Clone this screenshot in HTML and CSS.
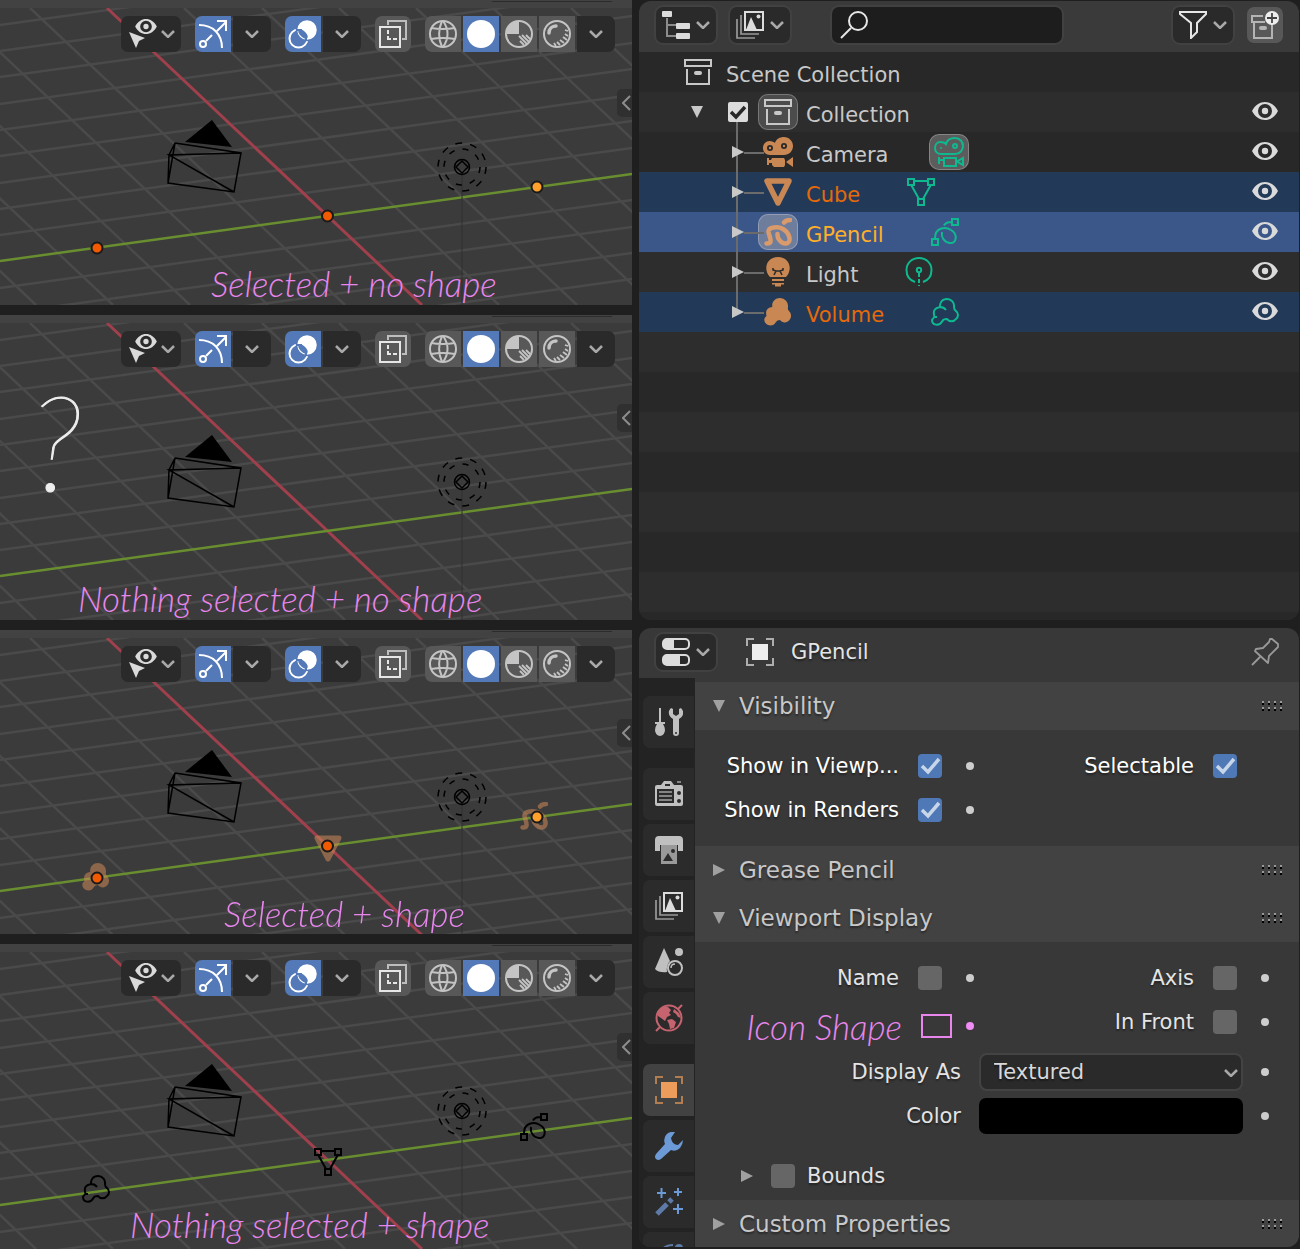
FILE: index.html
```html
<!DOCTYPE html>
<html lang="en">
<head>
  <meta charset="utf-8">
  <meta name="viewport" content="width=device-width, initial-scale=1">
  <title>Icon shapes for empties</title>
  <link rel="stylesheet" href="styles.css">
</head>
<body>

<!-- Icon sprite -->
<svg class="sprite" aria-hidden="true">
  <symbol id="chevron" viewBox="0 0 14 8"><path d="M1 1l6 6 6-6" fill="none" stroke="#a8a8a8" stroke-width="2.5"/></symbol>
  <symbol id="eye" viewBox="0 0 26 18"><path fill="currentColor" fill-rule="evenodd" d="M0 9C6 -3 20 -3 26 9C20 21 6 21 0 9ZM13 2a7 7 0 1 0 0 14a7 7 0 1 0 0-14ZM13 5.8a3.2 3.2 0 1 1 0 6.4a3.2 3.2 0 1 1 0-6.4Z"/></symbol>
  <symbol id="tri-down" viewBox="0 0 12 12"><path fill="currentColor" d="M0 0h12L6 12Z"/></symbol>
  <symbol id="tri-right" viewBox="0 0 12 12"><path fill="currentColor" d="M0 0v12L12 6Z"/></symbol>
  <symbol id="grip" viewBox="0 0 22 10">
    <path stroke="#000" stroke-width="2" stroke-dasharray="2 4" d="M1 3h20M1 9h20"/>
    <path stroke="#999" stroke-width="2" stroke-dasharray="2 4" d="M1 1h20M1 7h20"/>
  </symbol>

  <!-- viewport toolbar -->
  <symbol id="i-gizmo" viewBox="0 0 36 36">
    <g fill="none" stroke="#fff" stroke-width="2"><path d="M4 9C18 9 27 18 27 32M22 15L31 6M22 5h9v10M11 25l6-6"/><circle cx="8" cy="28" r="3"/></g>
  </symbol>
  <symbol id="i-overlay" viewBox="0 0 36 36">
    <circle cx="13.5" cy="22.5" r="9" fill="none" stroke="#fff" stroke-width="2"/>
    <circle cx="22" cy="14" r="10.5" fill="#fff" stroke="#5379b8" stroke-width="1.5"/>
    <ellipse cx="18" cy="18" rx="6" ry="3" transform="rotate(45 18 18)" fill="#5379b8"/>
    <path d="M21 24.500v-5M12 14h5" stroke="#5379b8" stroke-width="2"/>
  </symbol>
  <symbol id="i-xray" viewBox="0 0 36 36">
    <g fill="none" stroke="#e6e6e6" stroke-width="2"><path d="M5 11h20v20H5Z"/><path d="M13 14v4M13 20v3h3M18 23h4"/><path stroke="#bdbdbd" d="M13 9V5h18v18h-4"/></g>
  </symbol>
  <symbol id="i-wire" viewBox="0 0 36 36">
    <g fill="none" stroke="#c4c4c4" stroke-width="2"><circle cx="18" cy="18" r="13"/><path d="M17 5C13 14 13 22 17 31M18 5C24 13 24 23 18 31M6 12q12 2 24 0M6 23q12-2 24 0"/></g>
  </symbol>
  <symbol id="i-solid" viewBox="0 0 36 36"><circle cx="18" cy="18" r="14" fill="#fff"/></symbol>
  <symbol id="i-material" viewBox="0 0 36 36">
    <circle cx="18" cy="18" r="13" fill="none" stroke="#c4c4c4" stroke-width="2"/>
    <path d="M18 18V5A13 13 0 0 0 5 18Z" fill="#c4c4c4"/>
    <path d="M18 20l8 8M21 19l7 7M19 25l4 4M25 19l5 5" stroke="#c4c4c4" stroke-width="1.8"/>
  </symbol>
  <symbol id="i-render" viewBox="0 0 36 36">
    <circle cx="18" cy="18" r="13" fill="none" stroke="#c4c4c4" stroke-width="2"/>
    <path d="M10 17C10 13 13 10 17 10" fill="none" stroke="#c4c4c4" stroke-width="3.5" stroke-linecap="round"/>
    <path d="M26 14l3 1M26 18l3 2M24 21l4 3M21 24l4 3M18 26l3 3M15 27l2 3" stroke="#c4c4c4" stroke-width="1.8"/>
  </symbol>

  <!-- editor headers -->
  <symbol id="i-outliner" viewBox="0 0 28 28">
    <path d="M5 7v18h9M5 14h9" fill="none" stroke="#8c8c8c" stroke-width="2"/>
    <g fill="#dcdcdc"><rect width="10" height="6" rx="1"/><rect x="14" y="12" width="14" height="6" rx="1"/><rect x="14" y="22" width="14" height="6" rx="1"/></g>
  </symbol>
  <symbol id="i-layers" viewBox="0 0 28 28">
    <path d="M1 8v19h18M5 4v19h18" fill="none" stroke="#999" stroke-width="1.7"/>
    <path d="M9 1h18v18H9Z" fill="none" stroke="#dcdcdc" stroke-width="2"/>
    <path d="M10 19l5-13 6 13Z" fill="#dcdcdc"/><circle cx="22.5" cy="5.5" r="2" fill="#dcdcdc"/>
  </symbol>
  <symbol id="i-search" viewBox="0 0 28 28"><g fill="none" stroke="#e6e6e6" stroke-width="2"><circle cx="18" cy="10" r="9"/><path d="M11 17L1 27"/></g></symbol>
  <symbol id="i-filter" viewBox="0 0 28 28"><path d="M1 1h26v2l-9 9v9l-6 6V12L1 3Z" fill="none" stroke="#e6e6e6" stroke-width="2"/></symbol>
  <symbol id="i-newcol" viewBox="0 0 28 28">
    <g fill="none" stroke="#b4b4b4" stroke-width="2"><path d="M12 5H1v6h13M3 12v15h18V14"/></g>
    <rect x="8" y="15" width="8" height="4" rx="2" fill="#b4b4b4"/>
    <circle cx="21" cy="7" r="7" fill="#eee"/><path d="M21 2v10M16 7h10" stroke="#444" stroke-width="1.8"/>
  </symbol>
  <symbol id="i-props" viewBox="0 0 28 28">
    <g fill="none" stroke="#dcdcdc" stroke-width="2"><rect x="1" y="1" width="26" height="10" rx="4"/><rect x="1" y="17" width="26" height="10" rx="4"/></g>
    <path d="M5 1h7v10H5a4 4 0 0 1-4-4V5a4 4 0 0 1 4-4ZM5 17h13v10H5a4 4 0 0 1-4-4v-2a4 4 0 0 1 4-4Z" fill="#dcdcdc"/>
  </symbol>
  <symbol id="i-object" viewBox="0 0 28 28">
    <rect x="6" y="6" width="16" height="16" fill="currentColor"/>
    <path d="M1 8V1h7M20 1h7v7M27 20v7h-7M8 27H1v-7" fill="none" stroke="currentColor" stroke-width="2" opacity=".65"/>
  </symbol>
  <symbol id="i-pin" viewBox="0 0 28 28"><path d="M1 27l8-8M5 14l12 11 1-7 9-9V6l-6-5h-2l-1 3-6 6-7 1-1 2Z" fill="none" stroke="#999" stroke-width="1.8" stroke-linejoin="round"/></symbol>

  <!-- outliner -->
  <symbol id="i-archive" viewBox="0 0 28 28"><g fill="none" stroke="currentColor" stroke-width="2"><path d="M1 2h26v6H1ZM3 11v15h22V11"/></g><rect x="10" y="13" width="8" height="4" rx="2" fill="currentColor"/></symbol>
  <symbol id="i-camera" viewBox="0 0 30 30">
    <path fill="currentColor" fill-rule="evenodd" d="M6.500 4C9 4 11 5 12 6C13 2 17 0 21 0C26 0 30 4 30 9C30 14 26 18 21 18H7C3 18 0 15 0 11C0 7 3 4 6.500 4ZM7 8a3 3 0 1 0 0 6a3 3 0 1 0 0-6ZM21 6a3 3 0 1 0 0 6a3 3 0 1 0 0-6Z"/>
    <path fill="currentColor" d="M4 21h2v2h2l1-2h12l1 2v5l-1 2H11l-2-2v-2H6v2H4ZM23 25l7-5v10Z"/>
    <circle cx="7" cy="11" r="1.2" fill="currentColor"/><circle cx="21" cy="9" r="1.2" fill="currentColor"/>
  </symbol>
  <symbol id="i-camera-data" viewBox="0 0 30 30">
    <g fill="none" stroke="currentColor" stroke-width="2"><path d="M6.500 5C9 5 11 6 12 7C13 3 17 1 21 1C26 1 29 5 29 9C29 13 26 17 21 17H7C3 17 1 14 1 11C1 8 3 5 6.500 5Z"/><circle cx="21" cy="9" r="2"/><path d="M5 20v7M5 23h5v-2h12v8H10v-5M29 21v7l-6-3.500Z"/></g>
    <circle cx="7" cy="11" r="1" fill="currentColor"/>
  </symbol>
  <symbol id="i-mesh" viewBox="0 0 28 28"><path d="M3 3h22L14 25Z" fill="none" stroke="currentColor" stroke-width="5.5" stroke-linejoin="round"/></symbol>
  <symbol id="i-mesh-data" viewBox="0 0 28 28"><path d="M1 1h6v6H1ZM21 1h6v6h-6ZM11 21h6v6h-6ZM7 3h14M4.500 7.500L12 21M23.500 7.500L16 21" fill="none" stroke="currentColor" stroke-width="2"/></symbol>
  <symbol id="i-gp" viewBox="0 0 28 28"><path d="M2.500 25.500C10 26 5 18 4.500 14C4 9 14 8 19 11C26 15 28 25 22 25.500C17 26 13 20 13.500 16M20 4.500Q22 2 26 2" fill="none" stroke="currentColor" stroke-width="4.5" stroke-linecap="round"/></symbol>
  <symbol id="i-gp-data" viewBox="0 0 28 28"><path d="M1 21h6v6H1ZM21 1h6v6h-6ZM13 7.500Q15 4 20 4M4 20C4 10 14 8 20 12C27 16 26 26 18.500 25C13 24 10 19 11 14" fill="none" stroke="currentColor" stroke-width="2"/></symbol>
  <symbol id="i-light" viewBox="0 0 28 30">
    <path fill="currentColor" d="M6 20C-1 13 2 0 14 0S29 13 22 20ZM8 22h12v2H8ZM8 26h12v1.500h-3v2h-6v-2H8Z"/>
    <path d="M9 11v2l3 1h4l3-1v-2M12 14l-2 4M16 14l2 4" fill="none" stroke="#2c2c2c" stroke-width="1.6"/>
  </symbol>
  <symbol id="i-light-data" viewBox="0 0 28 30"><g fill="none" stroke="currentColor" stroke-width="2"><path d="M10 25C4 23 1.500 18 1.500 13C1.500 6 7 1 14 1S26.500 6 26.500 13C26.500 18 24 23 18 25"/><circle cx="14" cy="13" r="2.2"/><path d="M14 16v13" stroke-dasharray="4 2"/></g></symbol>
  <symbol id="i-volume" viewBox="0 0 28 28"><path fill="currentColor" d="M16 0a8 8 0 0 1 8 9q-.5 3 1 4a6.500 6.500 0 0 1 .5 9C23 25.500 18 25 16 22q-3 0-4 2C9 30 0 28 .3 21Q1 19 2.500 18C1 12 4 9.500 8.300 9C7.500 4 11 0 16 0Z"/></symbol>
  <symbol id="i-volume-data" viewBox="0 0 28 28"><path d="M16 1a7 7 0 0 1 7 8q0 3 2 4a5 5 0 0 1 0 8C23 24 18 24 16 21q-4 0-4.500 2C8 29 1 27 1 22Q2 20 3.500 19C1.500 12 4 10 9 9C8.500 5 11 1 16 1ZM9 9q4 0 6 3M3 19h3" fill="none" stroke="currentColor" stroke-width="2"/></symbol>

  <!-- property tabs -->
  <symbol id="t-tool" viewBox="0 0 28 28"><g fill="#c0c0c0"><path d="M4 0h2v14h4v2H8q2 3 2 6a5 6 0 0 1-10 0q0-3 2-6H0v-2h4Z"/><path fill-rule="evenodd" d="M16 0C12 4 14 9 18 11V25a3 3 0 0 0 6 0V11C28 9 30 4 26 0L24 1v5l-3 2-3-2V1ZM21 24a1 1 0 1 1 0 2a1 1 0 1 1 0-2Z"/></g></symbol>
  <symbol id="t-render" viewBox="0 0 28 28">
    <path fill="#c0c0c0" fill-rule="evenodd" d="M2 5h4l3-4h7l3 4h7q2 0 2 2v17q0 2-2 2H2q-2 0-2-2V7q0-2 2-2ZM10 4v2h5V4ZM2 9v14h17V9ZM24 11a2 2 0 1 0 0 4a2 2 0 1 0 0-4ZM24 19a2 2 0 1 0 0 4a2 2 0 1 0 0-4Z"/>
    <path d="M4 12h13M4 16h13M4 20h13M22 2h4" stroke="#858585" stroke-width="2"/>
  </symbol>
  <symbol id="t-output" viewBox="0 0 28 28">
    <path d="M4 0h20q4 0 4 4v11h-5V9H5v6H0V4q0-4 4-4Z" fill="#c0c0c0"/>
    <path d="M6 9h16v19H6Z" fill="#999"/><path d="M8 25l5-8 5 8Z" fill="#2c2c2c"/><circle cx="18" cy="15" r="2" fill="#2c2c2c"/>
  </symbol>
  <symbol id="t-scene" viewBox="0 0 28 28"><path d="M9 0l6 13q-4 4-3 11Q4 25 0 21Z" fill="#c0c0c0"/><circle cx="24" cy="4" r="4" fill="#c0c0c0"/><circle cx="20" cy="20" r="7" fill="none" stroke="#c0c0c0" stroke-width="2"/><path d="M16 20q0-4 4-4" fill="none" stroke="#c0c0c0" stroke-width="1.5"/></symbol>
  <symbol id="t-world" viewBox="0 0 28 28">
    <circle cx="14" cy="14" r="12.5" fill="none" stroke="#c5636f" stroke-width="2"/>
    <path d="M1 27l4-4M23 5l4-4" stroke="#c5636f" stroke-width="2"/>
    <path fill="#c5636f" d="M3 8l5-5 5 0 3 3-2 3 2 2-4 2-2 4-4-3-3-2ZM12 16l5-1 4 3-2 6-4 1-1-5ZM19 5l5 4 2 5-3-1-2-3-3-2Z"/>
  </symbol>
  <symbol id="t-modifier" viewBox="0 0 28 28"><path fill="#6b9ad6" d="M20 0q-6-1-9 3-3 4-1 9L1 22q-2 3 0 5t5 0l10-9q5 2 9-2 3-4 3-8l-5 5q-6 0-7-7Z"/></symbol>
  <symbol id="t-particle" viewBox="0 0 28 28"><path d="M6.500 0v10M2 5h9M23 0v8M19 4h8M23 16v10M18 21h10" stroke="#6b9ad6" stroke-width="2"/><path d="M2 26L12 16M14 14l3-3" stroke="#5d7ba6" stroke-width="5"/></symbol>
  <symbol id="t-physics" viewBox="0 0 28 28"><path d="M3 14C4 6 10 1 18 1M23 10C25 18 20 27 12 27" fill="none" stroke="#5d7ba6" stroke-width="2"/><circle cx="24" cy="4" r="4" fill="#5d7ba6"/><circle cx="13" cy="14" r="6" fill="#6b9ad6"/></symbol>

  <!-- 3D scene shared by all viewports -->
  <symbol id="scene" viewBox="0 0 632 305">
    <g fill="none" stroke="#4a4a4a" stroke-width="2.5">
      <path d="M0 25L632-63M0 51L632-36M0 77L632-10M0 104L632 16M0 130L632 43M0 156L632 69M0 183L632 95M0 209L632 121M0 235L632 148M0 288L632 200M0 314L632 227M0 340L632 253M0 367L632 279"/>
      <path d="M-279 8L36 305M-202 8L113 305M-125 8L190 305M-47 8L268 305M30 8L345 305M184 8L499 305M262 8L577 305M339 8L654 305M416 8L731 305M493 8L808 305M571 8L886 305"/>
    </g>
    <path d="M107 8L422 305" stroke="#a0404d" stroke-width="3"/>
    <path d="M0 261L632 174" stroke="#698e30" stroke-width="2.5"/>
    <path d="M462 175V305" stroke="#303030"/>
    <path d="M212 120L185 142L232 147Z"/>
    <path d="M175 143L241 153L234 192L168 183L169 155L175 143L168 183M241 153L169 155L234 192" fill="none" stroke="#000" stroke-width="1.5"/>
    <g fill="none" stroke="#000" stroke-width="1.5">
      <circle cx="462" cy="167" r="7.5"/><path d="M462 161l6 6-6 6-6-6Z"/>
      <circle cx="462" cy="167" r="18" stroke-dasharray="6 8.137"/><circle cx="462" cy="167" r="24" stroke-dasharray="7 8.080"/>
    </g>
  </symbol>
</svg>

<template id="toolbar">
  <div class="strip"><span></span></div>
  <div class="toolbar">
    <button class="btn dark menu" aria-label="Object types visibility">
      <svg width="30" height="28" viewBox="0 0 30 28"><use href="#eye" x="8" y="-1" width="22" height="15"/><path d="M2 12l16 6-6 3-3 7Z" fill="#dadada"/></svg>
      <svg width="14" height="8"><use href="#chevron"/></svg>
    </button>
    <div class="group">
      <button class="btn blue" aria-label="Show gizmos"><svg width="36" height="36"><use href="#i-gizmo"/></svg></button>
      <button class="btn dark" aria-label="Gizmo options"><svg width="14" height="8"><use href="#chevron"/></svg></button>
    </div>
    <div class="group">
      <button class="btn blue" aria-label="Show overlays"><svg width="36" height="36"><use href="#i-overlay"/></svg></button>
      <button class="btn dark" aria-label="Overlay options"><svg width="14" height="8"><use href="#chevron"/></svg></button>
    </div>
    <div class="group"><button class="btn" aria-label="Toggle X-ray"><svg width="36" height="36"><use href="#i-xray"/></svg></button></div>
    <div class="group">
      <button class="btn" aria-label="Wireframe"><svg width="36" height="36"><use href="#i-wire"/></svg></button>
      <button class="btn blue" aria-label="Solid"><svg width="36" height="36"><use href="#i-solid"/></svg></button>
      <button class="btn" aria-label="Material preview"><svg width="36" height="36"><use href="#i-material"/></svg></button>
      <button class="btn" aria-label="Rendered"><svg width="36" height="36"><use href="#i-render"/></svg></button>
      <button class="btn dark" aria-label="Shading options"><svg width="14" height="8"><use href="#chevron"/></svg></button>
    </div>
  </div>
  <button class="side-toggle" aria-label="Show sidebar"><svg width="9" height="16" viewBox="0 0 9 16"><path d="M8 1L1 8l7 7" fill="none" stroke="#8c8c8c" stroke-width="2"/></svg></button>
</template>

<div class="app">
  <main class="viewports">
    <section class="viewport">
      <svg class="canvas" viewBox="0 0 632 305" preserveAspectRatio="xMinYMin slice">
        <use href="#scene" width="632" height="305"/>
        <circle class="origin" cx="97" cy="248" r="5.5"/>
        <circle class="origin" cx="327.5" cy="216" r="5.5"/>
        <circle class="origin active" cx="537" cy="187" r="5.5"/>
        <text class="note" x="211" y="297">Selected + no shape</text>
      </svg>
    </section>
    <section class="viewport">
      <svg class="canvas" viewBox="0 0 632 305" preserveAspectRatio="xMinYMin slice">
        <use href="#scene" width="632" height="305"/>
        <text class="question" x="30" y="176">?</text>
        <text class="note" x="78" y="297">Nothing selected + no shape</text>
      </svg>
    </section>
    <section class="viewport">
      <svg class="canvas" viewBox="0 0 632 305" preserveAspectRatio="xMinYMin slice">
        <use href="#scene" width="632" height="305"/>
        <g color="#d08a5a" opacity=".55">
          <use href="#i-volume" x="82" y="233" width="28" height="28"/>
          <path d="M317 208h22l-11 21Z" fill="#d08a5a" stroke="#d08a5a" stroke-width="5" stroke-linejoin="round"/>
          <use href="#i-gp" x="520" y="172" width="28" height="28"/>
        </g>
        <circle class="origin" cx="97" cy="248" r="5.5"/>
        <circle class="origin" cx="327.5" cy="216" r="5.5"/>
        <circle class="origin active" cx="537" cy="187" r="5.5"/>
        <text class="note" x="224" y="297">Selected + shape</text>
      </svg>
    </section>
    <section class="viewport">
      <svg class="canvas" viewBox="0 0 632 305" preserveAspectRatio="xMinYMin slice">
        <use href="#scene" width="632" height="305"/>
        <g color="#000">
          <use href="#i-volume-data" x="82" y="231" width="28" height="28"/>
          <use href="#i-mesh-data" x="314" y="204" width="28" height="28"/>
          <use href="#i-gp-data" x="520" y="169" width="28" height="28"/>
        </g>
        <text class="note" x="130" y="294">Nothing selected + shape</text>
      </svg>
    </section>
  </main>

  <div class="editors">
    <!-- Outliner -->
    <section class="panel outliner">
      <header class="outliner-header">
        <button class="btn dark menu" aria-label="Editor type"><svg width="28" height="28"><use href="#i-outliner"/></svg><svg width="14" height="8"><use href="#chevron"/></svg></button>
        <button class="btn dark menu" aria-label="Display mode"><svg width="28" height="28"><use href="#i-layers"/></svg><svg width="14" height="8"><use href="#chevron"/></svg></button>
        <div class="search">
          <svg width="28" height="28"><use href="#i-search"/></svg>
          <input type="text" aria-label="Search">
        </div>
        <button class="btn dark menu filter" aria-label="Filter"><svg width="28" height="28"><use href="#i-filter"/></svg><svg width="14" height="8"><use href="#chevron"/></svg></button>
        <button class="btn" aria-label="New collection"><svg width="28" height="28"><use href="#i-newcol"/></svg></button>
      </header>
      <div class="rows">
        <div class="row root"><svg width="28" height="28"><use href="#i-archive"/></svg><span class="name">Scene Collection</span></div>
        <div class="row collection">
          <svg class="arrow" width="12" height="12"><use href="#tri-down"/></svg>
          <input type="checkbox" class="include" aria-label="Include Collection" checked>
          <span class="icon boxed"><svg width="28" height="28"><use href="#i-archive"/></svg></span>
          <span class="name">Collection</span>
          <button class="eye" aria-label="Hide Collection"><svg width="26" height="18"><use href="#eye"/></svg></button>
        </div>
        <div class="children">
          <div class="row child">
            <svg class="arrow" width="12" height="12"><use href="#tri-right"/></svg>
            <span class="icon"><svg width="30" height="30"><use href="#i-camera"/></svg></span>
            <span class="name">Camera</span>
            <span class="icon data boxed"><svg width="30" height="30"><use href="#i-camera-data"/></svg></span>
            <button class="eye" aria-label="Hide Camera"><svg width="26" height="18"><use href="#eye"/></svg></button>
          </div>
          <div class="row child selected">
            <svg class="arrow" width="12" height="12"><use href="#tri-right"/></svg>
            <span class="icon"><svg width="28" height="28"><use href="#i-mesh"/></svg></span>
            <span class="name">Cube</span>
            <span class="icon data"><svg width="28" height="28"><use href="#i-mesh-data"/></svg></span>
            <button class="eye" aria-label="Hide Cube"><svg width="26" height="18"><use href="#eye"/></svg></button>
          </div>
          <div class="row child active">
            <svg class="arrow" width="12" height="12"><use href="#tri-right"/></svg>
            <span class="icon boxed"><svg width="28" height="28"><use href="#i-gp"/></svg></span>
            <span class="name">GPencil</span>
            <span class="icon data"><svg width="28" height="28"><use href="#i-gp-data"/></svg></span>
            <button class="eye" aria-label="Hide GPencil"><svg width="26" height="18"><use href="#eye"/></svg></button>
          </div>
          <div class="row child">
            <svg class="arrow" width="12" height="12"><use href="#tri-right"/></svg>
            <span class="icon"><svg width="28" height="30"><use href="#i-light"/></svg></span>
            <span class="name">Light</span>
            <span class="icon data"><svg width="28" height="30"><use href="#i-light-data"/></svg></span>
            <button class="eye" aria-label="Hide Light"><svg width="26" height="18"><use href="#eye"/></svg></button>
          </div>
          <div class="row child selected">
            <svg class="arrow" width="12" height="12"><use href="#tri-right"/></svg>
            <span class="icon"><svg width="28" height="28"><use href="#i-volume"/></svg></span>
            <span class="name">Volume</span>
            <span class="icon data"><svg width="28" height="28"><use href="#i-volume-data"/></svg></span>
            <button class="eye" aria-label="Hide Volume"><svg width="26" height="18"><use href="#eye"/></svg></button>
          </div>
        </div>
      </div>
    </section>

    <!-- Properties -->
    <section class="panel properties">
      <header class="props-header">
        <button class="btn dark menu" aria-label="Editor type"><svg width="28" height="28"><use href="#i-props"/></svg><svg width="14" height="8"><use href="#chevron"/></svg></button>
        <svg class="object" width="28" height="28"><use href="#i-object"/></svg>
        <span>GPencil</span>
        <button class="pin" aria-label="Pin"><svg width="28" height="28"><use href="#i-pin"/></svg></button>
      </header>
      <div class="props-body">
        <nav class="tabs">
          <button class="last" aria-label="Tool"><svg width="28" height="28"><use href="#t-tool"/></svg></button>
          <button aria-label="Render"><svg width="28" height="28"><use href="#t-render"/></svg></button>
          <button aria-label="Output"><svg width="28" height="28"><use href="#t-output"/></svg></button>
          <button aria-label="View layer"><svg width="28" height="28"><use href="#i-layers"/></svg></button>
          <button aria-label="Scene"><svg width="28" height="28"><use href="#t-scene"/></svg></button>
          <button class="last" aria-label="World"><svg width="28" height="28"><use href="#t-world"/></svg></button>
          <button class="current" aria-label="Object"><svg width="28" height="28"><use href="#i-object"/></svg></button>
          <button aria-label="Modifiers"><svg width="28" height="28"><use href="#t-modifier"/></svg></button>
          <button aria-label="Particles"><svg width="28" height="28"><use href="#t-particle"/></svg></button>
          <button aria-label="Physics"><svg width="28" height="28"><use href="#t-physics"/></svg></button>
        </nav>
        <div class="sections">
          <h2><svg width="12" height="12"><use href="#tri-down"/></svg>Visibility<svg class="grip" width="22" height="10"><use href="#grip"/></svg></h2>
          <div class="fields visibility">
            <div class="pair">
              <div class="field bright"><label for="show-viewport">Show in Viewp...</label><input type="checkbox" id="show-viewport" checked><i class="dot"></i></div>
              <div class="field bright"><label for="selectable">Selectable</label><input type="checkbox" id="selectable" checked><i class="dot none"></i></div>
              <div class="field bright"><label for="show-render">Show in Renders</label><input type="checkbox" id="show-render" checked><i class="dot"></i></div>
            </div>
          </div>
          <h2><svg width="12" height="12"><use href="#tri-right"/></svg>Grease Pencil<svg class="grip" width="22" height="10"><use href="#grip"/></svg></h2>
          <h2><svg width="12" height="12"><use href="#tri-down"/></svg>Viewport Display<svg class="grip" width="22" height="10"><use href="#grip"/></svg></h2>
          <div class="fields display">
            <div class="pair">
              <div class="field"><label for="name">Name</label><input type="checkbox" id="name"><i class="dot"></i></div>
              <div class="field"><label for="axis">Axis</label><input type="checkbox" id="axis"><i class="dot"></i></div>
              <div class="field sketch"><label for="icon-shape">Icon Shape</label><input type="checkbox" id="icon-shape"><i class="dot"></i></div>
              <div class="field"><label for="in-front">In Front</label><input type="checkbox" id="in-front"><i class="dot"></i></div>
            </div>
            <div class="wide">
              <label for="display-as">Display As</label>
              <div class="select">
                <select id="display-as"><option>Textured</option><option>Solid</option><option>Wire</option><option>Bounds</option></select>
                <svg width="14" height="8"><use href="#chevron"/></svg>
              </div>
              <i class="dot"></i>
              <label for="color">Color</label>
              <input type="color" id="color" value="#000000">
              <i class="dot"></i>
            </div>
            <div class="bounds">
              <svg width="12" height="12"><use href="#tri-right"/></svg>
              <input type="checkbox" id="bounds"><label for="bounds">Bounds</label>
            </div>
          </div>
          <h2><svg width="12" height="12"><use href="#tri-right"/></svg>Custom Properties<svg class="grip" width="22" height="10"><use href="#grip"/></svg></h2>
        </div>
      </div>
    </section>
  </div>
</div>

<script>
// every viewport gets the same header strip and toolbar
var toolbar = document.getElementById('toolbar');
document.querySelectorAll('.viewport').forEach(function (viewport) {
  viewport.appendChild(toolbar.content.cloneNode(true));
});
</script>

</body>
</html>
```
FILE: styles.css
```css
* {
  box-sizing: border-box;
}

body {
  margin: 0;
  background: #1f1f1f;
  color: #c8c8c8;
  font-family: "DejaVu Sans", sans-serif;
  font-size: 21px;
  line-height: 28px;
}

svg {
  display: block;
  flex: none;
}

button {
  border: none;
  padding: 0;
  background: none;
  color: inherit;
  cursor: pointer;
}

input {
  margin: 0;
}

.sprite {
  position: absolute;
  width: 0;
  height: 0;
}

.app {
  display: grid;
  grid-template-columns: 632fr 661fr;
  column-gap: 7px;
  height: 100vh;
  min-height: 1200px;
}

/* Viewports */
.viewports {
  display: grid;
  grid-template-rows: repeat(4, minmax(0, 1fr));
  row-gap: 10px;
  min-height: 0;
}

.viewport {
  position: relative;
  overflow: hidden;
  background: #3b3b3b;
}

.canvas {
  width: 100%;
  height: 100%;
}

.strip {
  position: absolute;
  top: 0;
  left: 0;
  right: 0;
  height: 8px;
  padding-right: 20px;
  background: #424242;
}

.strip span {
  display: block;
  width: 120px;
  height: 2px;
  margin-left: auto;
  border-bottom: 1px solid #2c2c2c;
}

.toolbar {
  position: absolute;
  top: 16px;
  right: 17px;
  display: flex;
  gap: 14px;
}

.toolbar svg {
  overflow: visible;
}

.group {
  display: flex;
  gap: 2px;
  border-radius: 7px;
  overflow: hidden;
}

.btn {
  display: flex;
  align-items: center;
  justify-content: center;
  width: 36px;
  height: 36px;
  background: #585858;
  border-radius: 7px;
}

.btn.dark {
  width: 38px;
  background: #2a2a2a;
}

.btn.blue {
  background: #5379b8;
}

.group .btn {
  border-radius: 0;
}

.btn.menu {
  width: 60px;
  gap: 6px;
  color: #dadada;
  box-shadow: 0 0 0 2px #414141;
}

.toolbar .btn.menu {
  gap: 4px;
  box-shadow: none;
}

.side-toggle {
  position: absolute;
  top: 89px;
  right: 0;
  display: flex;
  align-items: center;
  justify-content: flex-end;
  width: 15px;
  height: 28px;
  padding-right: 1px;
  background: #303030;
  border-radius: 5px 0 0 5px;
}

.origin {
  fill: #f15a00;
  stroke: #1a1a1a;
  stroke-width: 2;
}

.origin.active {
  fill: #ffa02d;
}

.note {
  fill: #e886ee;
  font: italic 300 35px Lato, sans-serif;
}

.question {
  fill: #eee;
  stroke: #eee;
  font: italic 100 132px Lato, sans-serif;
}

/* Right column */
.editors {
  display: grid;
  grid-template-rows: repeat(2, minmax(0, 1fr));
  row-gap: 8px;
  min-height: 0;
  padding: 1px 1px 2px 0;
}

.panel {
  display: flex;
  flex-direction: column;
  overflow: hidden;
  border-radius: 12px;
}

.outliner {
  background: #282828;
}

.outliner-header {
  display: flex;
  flex: none;
  align-items: center;
  gap: 14px;
  height: 51px;
  padding: 0 16px 4px 17px;
  background: #3a3a3a;
}

.search {
  display: flex;
  flex: 0 1 230px;
  align-items: center;
  min-width: 0;
  height: 36px;
  margin-left: 28px;
  padding-left: 8px;
  background: #1d1d1d;
  border-radius: 7px;
  box-shadow: 0 0 0 2px #414141;
}

.search input {
  flex: 1;
  min-width: 0;
  height: 36px;
  padding: 0 8px;
  border: none;
  outline: none;
  background: none;
  color: #e6e6e6;
  font: inherit;
}

.filter {
  margin-left: auto;
}

.rows {
  flex: 1;
  background: repeating-linear-gradient(#282828 0 40px, #2d2d2d 40px 80px);
}

.row {
  display: flex;
  align-items: center;
  height: 40px;
  padding-right: 21px;
}

.row .name {
  padding-top: 6px;
}

.root {
  gap: 14px;
  padding-left: 45px;
}

.collection {
  padding-left: 52px;
}

.include {
  appearance: none;
  width: 20px;
  height: 20px;
  margin: 0 10px 0 25px;
  border-radius: 2px;
  background: #dcdcdc url("data:image/svg+xml,%3Csvg xmlns='http://www.w3.org/2000/svg' viewBox='0 0 20 20'%3E%3Cpath d='M3 10l5 5 9-10' fill='none' stroke='%23282828' stroke-width='3.5'/%3E%3C/svg%3E");
}

.icon {
  display: flex;
  align-items: center;
  justify-content: center;
  width: 40px;
  height: 36px;
  margin-right: 8px;
  border-radius: 10px;
}

.boxed {
  background: rgba(255, 255, 255, 0.15);
  border: 1px solid rgba(255, 255, 255, 0.25);
}

.children {
  position: relative;
}

/* tree lines */
.children::before {
  content: '';
  position: absolute;
  z-index: 1;
  left: 97px;
  top: -10px;
  bottom: 20px;
  width: 2px;
  background: #6b6b6b;
}

.child {
  position: relative;
  padding-left: 93px;
}

.child::before {
  content: '';
  position: absolute;
  left: 105px;
  top: 20px;
  width: 20px;
  height: 2px;
  background: #6b6b6b;
}

.child .arrow {
  position: relative;
  z-index: 2;
  margin-right: 14px;
}

.child .icon {
  color: #c98853;
}

.child .icon.data {
  margin: 0 0 0 41px;
  color: #0fb990;
}

.data.boxed {
  background: #5c5c5c;
}

.selected {
  background: #223958;
}

.selected .name {
  color: #e46a0a;
}

.active.row {
  background: #3b5789;
}

.active .boxed {
  background: #6f7d9c;
  color: #d99a6c;
}

.active .name {
  color: #ffaf29;
}

.eye {
  margin-left: auto;
  padding-bottom: 2px;
  color: #dadada;
}

/* Properties */
.properties {
  background: #383838;
  text-shadow: 0 2px 2px rgba(0, 0, 0, 0.4);
}

.props-header {
  display: flex;
  flex: none;
  align-items: center;
  height: 50px;
  padding: 0 20px 2px 17px;
  color: #e4e4e4;
}

.props-header .object {
  margin: 0 17px 0 30px;
  color: #eee;
}

.pin {
  margin-left: auto;
}

.props-body {
  display: flex;
  flex: 1;
  min-height: 0;
}

.tabs {
  display: flex;
  flex: none;
  flex-direction: column;
  gap: 4px;
  width: 56px;
  padding: 18px 1px 0 4px;
  overflow: hidden;
  background: #232323;
}

.tabs button {
  display: flex;
  flex: none;
  align-items: center;
  justify-content: center;
  height: 52px;
  background: #2b2b2b;
  border-radius: 7px 0 0 7px;
}

.tabs .last {
  margin-bottom: 16px;
}

.tabs .current {
  background: #424242;
  color: #ed9c5c;
}

.sections {
  flex: 1;
  min-width: 0;
  padding-top: 4px;
}

.sections h2 {
  display: flex;
  align-items: center;
  gap: 14px;
  height: 48px;
  margin: 0;
  padding: 0 16px 0 18px;
  background: #424242;
  font-size: 23px;
  font-weight: normal;
}

.sections h2 svg,
.bounds svg {
  color: #a0a0a0;
}

.grip {
  margin-left: auto;
}

.fields {
  padding: 14px 30px 14px 27px;
  color: #e4e4e4;
}

.fields.display {
  padding-bottom: 2px;
}

.pair {
  display: grid;
  grid-template-columns: repeat(2, minmax(0, 1fr));
  column-gap: 43px;
}

.field {
  display: flex;
  align-items: center;
  height: 44px;
}

.field label {
  flex: 1;
  text-align: right;
  white-space: nowrap;
}

.bright {
  color: #fff;
}

.fields input[type='checkbox'] {
  appearance: none;
  flex: none;
  width: 24px;
  height: 24px;
  margin: 0 24px 0 19px;
  border-radius: 4px;
  background: #666;
}

.fields input[type='checkbox']:checked {
  background: #4f78b6 url("data:image/svg+xml,%3Csvg xmlns='http://www.w3.org/2000/svg' viewBox='0 0 24 24'%3E%3Cpath d='M4 12l6 6L21 5' fill='none' stroke='%23c8d6ea' stroke-width='3.5'/%3E%3C/svg%3E");
}

.dot {
  width: 8px;
  height: 8px;
  border-radius: 4px;
  background: #cdcdcd;
}

.dot.none {
  visibility: hidden;
}

.sketch {
  padding-top: 8px;
}

.sketch label {
  color: #e886ee;
  font: italic 300 35px Lato, sans-serif;
  text-shadow: none;
}

.fields .sketch input[type='checkbox'] {
  width: 31px;
  margin-right: 14px;
  border: 2px solid #e886ee;
  border-radius: 0;
  background: none;
}

.sketch .dot {
  background: #f08cf5;
}

.wide {
  display: grid;
  grid-template-columns: 239fr 264fr 8px;
  grid-auto-rows: 44px;
  column-gap: 18px;
  align-items: center;
  padding-top: 6px;
}

.wide label {
  text-align: right;
}

.select {
  position: relative;
}

.select select {
  appearance: none;
  display: block;
  width: 100%;
  height: 38px;
  padding: 0 36px 0 13px;
  border: 2px solid #434343;
  border-radius: 8px;
  background: #2a2a2a;
  color: #d8d8d8;
  font: inherit;
  text-shadow: inherit;
}

.select svg {
  position: absolute;
  right: 5px;
  top: 16px;
}

.wide input {
  appearance: none;
  width: 100%;
  height: 36px;
  padding: 0;
  border: none;
  border-radius: 7px;
  background: #000;
  overflow: hidden;
}

.wide input::-webkit-color-swatch-wrapper {
  padding: 0;
}

.wide input::-webkit-color-swatch {
  border: none;
}

.bounds {
  display: flex;
  align-items: center;
  height: 44px;
  margin-top: 16px;
  padding-left: 19px;
}

.fields .bounds input[type='checkbox'] {
  margin: 0 12px 0 18px;
}
```
